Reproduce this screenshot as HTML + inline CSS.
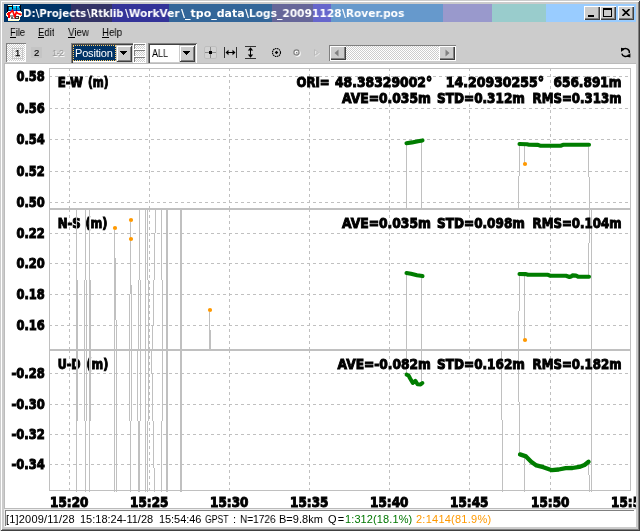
<!DOCTYPE html>
<html><head><meta charset="utf-8"><title>RTKPLOT</title>
<style>
html,body{margin:0;padding:0;}
body{width:640px;height:531px;overflow:hidden;background:#cccccc;font:11px 'Liberation Sans', sans-serif;}
#win{position:absolute;left:0;top:0;width:640px;height:531px;background:#cccccc;overflow:hidden;
 box-shadow:inset 1px 1px 0 #cccccc,inset -1px -1px 0 #404040,inset 2px 2px 0 #fff,inset -2px -2px 0 #808080;}
.abs,.t{position:absolute;}
.t{white-space:pre;display:block;will-change:transform;}
svg.plot{will-change:transform;}
#title{left:4px;top:4px;width:632px;height:18px;background:linear-gradient(90deg,#003366 0px,#003366 67px,#333366 67px,#333366 108px,#333399 108px,#333399 165px,#336699 165px,#336699 268px,#666699 268px,#666699 309px,#6666cc 309px,#6666cc 327px,#6699cc 327px,#6699cc 439.5px,#9999cc 439.5px,#9999cc 488.5px,#99cccc 488.5px,#99cccc 542.5px,#99ccff 542.5px,#99ccff 632px);}
.cbtn{position:absolute;top:6px;width:16px;height:14px;background:#cccccc;box-sizing:border-box;
 box-shadow:inset 1px 1px 0 #fff,inset -1px -1px 0 #404040,inset -2px -2px 0 #808080;}
.sunk{box-shadow:inset 1px 1px 0 #808080,inset -1px -1px 0 #fff,inset 2px 2px 0 #404040,inset -2px -2px 0 #cccccc;}
.raise{box-shadow:inset 1px 1px 0 #cccccc,inset -1px -1px 0 #404040,inset 2px 2px 0 #fff,inset -2px -2px 0 #808080;}
.dith{background-image:conic-gradient(#fff 25%,#cccccc 0 50%,#fff 0 75%,#cccccc 0);background-size:2px 2px;}
svg.plot{position:absolute;left:0;top:0;}
u{text-decoration:none;}
</style></head>
<body>
<div id="win">
<div id="title" class="abs"></div>
<svg class="abs" style="left:6px;top:5px" width="16" height="16" viewBox="0 0 16 16" shape-rendering="crispEdges">
<rect x="2" y="1" width="12" height="14" fill="#fff"/><rect x="1" y="6" width="14" height="6" fill="#fff"/><rect x="14" y="7" width="2" height="4" fill="#fff"/>
<rect x="2" y="0" width="4" height="1" fill="#ffffcc"/><rect x="7" y="0" width="4" height="1" fill="#fff"/><rect x="0" y="8" width="1" height="3" fill="#ffffcc"/>
<rect x="2" y="15" width="11" height="1" fill="#ffffcc"/><rect x="14" y="4" width="1" height="3" fill="#ffffcc"/><rect x="15" y="8" width="1" height="3" fill="#ffffcc"/><rect x="13" y="12" width="1" height="3" fill="#ffffcc"/>
<rect x="2" y="1" width="12" height="5" fill="#003366"/>
<rect x="2" y="1" width="4" height="1" fill="#000"/><rect x="1" y="1" width="1" height="6" fill="#000"/><rect x="14" y="0" width="1" height="6" fill="#000"/>
<rect x="3" y="2" width="3" height="3" fill="#00ccff"/><rect x="3" y="4" width="3" height="1" fill="#0099cc"/><rect x="4" y="5" width="2" height="1" fill="#0033cc"/>
<rect x="7" y="1" width="3" height="4" fill="#00ccff"/><rect x="7" y="3" width="3" height="2" fill="#0099cc"/><rect x="7" y="5" width="3" height="1" fill="#0033cc"/>
<rect x="11" y="1" width="2" height="4" fill="#00ccff"/><rect x="11" y="3" width="3" height="2" fill="#0099cc"/><rect x="11" y="5" width="3" height="1" fill="#0033cc"/>
<rect x="10" y="0" width="4" height="1" fill="#fff"/><rect x="6" y="1" width="1" height="3" fill="#000"/><rect x="10" y="1" width="1" height="4" fill="#003366"/>
<rect x="4" y="10" width="4" height="2" fill="#999"/><rect x="5" y="12" width="2" height="2" fill="#666"/><rect x="9" y="11" width="4" height="3" fill="#333"/><rect x="10" y="12" width="2" height="1" fill="#ccc"/><rect x="7" y="13" width="2" height="1" fill="#999"/>
<polyline points="1.5,9 3.5,8.5 6.5,5.5 8.8,11.5 10.4,7.2 12,8.6 15.5,9.6" fill="none" stroke="#ff0000" stroke-width="1.7" shape-rendering="auto"/>
<rect x="2" y="7" width="2" height="6" fill="#ff0000"/><rect x="1" y="8" width="1" height="2" fill="#ff0000"/>
</svg>
<span class="t" style="left:22.67px;top:6px;line-height:15px;font:bold 11px 'DejaVu Sans', 'Liberation Sans', sans-serif;line-height:15px;letter-spacing:0px;color:#fff;transform:scaleX(0.929);transform-origin:0 0;">D:\Projects</span>
<span class="t" style="left:87.4px;top:6px;line-height:15px;font:bold 11px 'DejaVu Sans', 'Liberation Sans', sans-serif;line-height:15px;letter-spacing:0px;color:#fff;transform:scaleX(0.9014);transform-origin:0 0;">\Rtklib</span>
<span class="t" style="left:125.0px;top:6px;line-height:15px;font:bold 11px 'DejaVu Sans', 'Liberation Sans', sans-serif;line-height:15px;letter-spacing:0px;color:#fff;transform:scaleX(0.9577);transform-origin:0 0;">\WorkVer</span>
<span class="t" style="left:181.0px;top:6px;line-height:15px;font:bold 11px 'DejaVu Sans', 'Liberation Sans', sans-serif;line-height:15px;letter-spacing:0px;color:#fff;transform:scaleX(0.9959);transform-origin:0 0;">\_tpo_data</span>
<span class="t" style="left:245.0px;top:6px;line-height:15px;font:bold 11px 'DejaVu Sans', 'Liberation Sans', sans-serif;line-height:15px;letter-spacing:0px;color:#fff;transform:scaleX(0.9689);transform-origin:0 0;">\Logs_20091128</span>
<span class="t" style="left:342.0px;top:6px;line-height:15px;font:bold 11px 'DejaVu Sans', 'Liberation Sans', sans-serif;line-height:15px;letter-spacing:0px;color:#fff;transform:scaleX(0.9625);transform-origin:0 0;">\Rover.pos</span>
<div class="cbtn" style="left:584px"><div class="abs" style="left:4px;top:9px;width:6px;height:2px;background:#000"></div></div>
<div class="cbtn" style="left:600px"><div class="abs" style="left:3px;top:2px;width:9px;height:9px;box-sizing:border-box;border:1px solid #000;border-top-width:2px"></div></div>
<div class="cbtn" style="left:618px"><svg class="abs" style="left:4px;top:3px" width="8" height="7" viewBox="0 0 8 7"><path d="M0.5 0L7.5 7M7.5 0L0.5 7" stroke="#000" stroke-width="1.6" fill="none"/></svg></div>
<span class="t" style="left:10.0px;top:25px;line-height:14px;font:11px 'Liberation Sans', sans-serif;line-height:14px;letter-spacing:0px;color:#000;transform:scaleX(0.8519);transform-origin:0 0;">File</span>
<span class="t" style="left:38.0px;top:25px;line-height:14px;font:11px 'Liberation Sans', sans-serif;line-height:14px;letter-spacing:0px;color:#000;transform:scaleX(0.8678);transform-origin:0 0;">Edit</span>
<span class="t" style="left:68.0px;top:25px;line-height:14px;font:11px 'Liberation Sans', sans-serif;line-height:14px;letter-spacing:0px;color:#000;transform:scaleX(0.8861);transform-origin:0 0;">View</span>
<span class="t" style="left:102.0px;top:25px;line-height:14px;font:11px 'Liberation Sans', sans-serif;line-height:14px;letter-spacing:0px;color:#000;transform:scaleX(0.8887);transform-origin:0 0;">Help</span>
<div class="abs" style="left:10px;top:37px;width:6px;height:1px;background:#000"></div>
<div class="abs" style="left:38px;top:37px;width:6px;height:1px;background:#000"></div>
<div class="abs" style="left:68px;top:37px;width:7px;height:1px;background:#000"></div>
<div class="abs" style="left:102px;top:37px;width:7px;height:1px;background:#000"></div>
<div class="abs dith" style="left:6px;top:43px;width:20px;height:19px;box-shadow:inset 1px 1px 0 #808080,inset -1px -1px 0 #fff;"></div>
<div class="abs" style="left:12px;top:48px;width:11px;height:11px;box-sizing:border-box;border:1px solid #c6c6c6;"></div>
<span class="t" style="left:15px;top:48px;font:9.5px 'Liberation Sans', sans-serif;line-height:10px;color:#000;-webkit-text-stroke:0.25px #000">1</span>
<div class="abs" style="left:31px;top:47px;width:11px;height:11px;background:#c4c4c4"></div>
<span class="t" style="left:33.8px;top:47.5px;font:9.5px 'Liberation Sans', sans-serif;line-height:10px;color:#000;-webkit-text-stroke:0.15px #000">2</span>
<span class="t" style="left:52px;top:47.5px;font:9.5px 'Liberation Sans', sans-serif;line-height:10px;letter-spacing:-0.9px;color:#999;text-shadow:1px 1px 0 #fff">1-2</span>
<div class="abs sunk" style="left:71px;top:43px;width:63px;height:21px;background:#fff"></div><div class="abs" style="left:73px;top:45px;width:43px;height:16px;background:#003366;box-sizing:border-box;border:1px dotted #ffcc66"></div><span class="t" style="left:74.6px;top:46px;line-height:14px;font:11px 'Liberation Sans', sans-serif;line-height:14px;letter-spacing:-0.174px;color:#fff;">Position</span><div class="abs raise" style="left:116px;top:45px;width:16px;height:17px;background:#cccccc"></div><svg class="abs" style="left:120px;top:51px" width="7" height="4" viewBox="0 0 7 4" shape-rendering="crispEdges"><path d="M0 0H7V1H0ZM1 1H6V2H1ZM2 2H5V3H2ZM3 3H4V4H3Z" fill="#000"/></svg>
<div class="abs" style="left:133px;top:43px;width:13px;height:20px;background:#fff"></div>
<div class="abs dith" style="left:134px;top:44px;width:11px;height:5px;box-shadow:inset 1px 1px 0 #808080"></div>
<div class="abs dith" style="left:134px;top:50px;width:11px;height:6px;box-shadow:inset 1px 1px 0 #808080"></div>
<div class="abs dith" style="left:134px;top:57px;width:11px;height:5px;box-shadow:inset 1px 1px 0 #808080"></div>
<div class="abs sunk" style="left:148px;top:43px;width:49px;height:21px;background:#fff"></div><span class="t" style="left:152.0px;top:46px;line-height:14px;font:11px 'Liberation Sans', sans-serif;line-height:14px;letter-spacing:0px;color:#000;transform:scaleX(0.8224);transform-origin:0 0;">ALL</span><div class="abs raise" style="left:179px;top:45px;width:16px;height:17px;background:#cccccc"></div><svg class="abs" style="left:183px;top:51px" width="7" height="4" viewBox="0 0 7 4" shape-rendering="crispEdges"><path d="M0 0H7V1H0ZM1 1H6V2H1ZM2 2H5V3H2ZM3 3H4V4H3Z" fill="#000"/></svg>
<svg class="abs" style="left:200px;top:43px" width="125" height="20" viewBox="200 43 125 20" shape-rendering="crispEdges">
<rect x="204.5" y="46.5" width="12" height="12" rx="1.5" fill="#d2d2d2" stroke="#bdbdbd" stroke-width="1" shape-rendering="auto"/>
<rect x="205" y="52" width="11" height="1" fill="#8a8a8a"/><rect x="210" y="47" width="1" height="11" fill="#8a8a8a"/><rect x="209" y="51" width="3" height="3" fill="#000"/>
<rect x="224" y="47" width="1" height="11" fill="#333"/><rect x="236" y="47" width="1" height="11" fill="#333"/>
<rect x="226" y="52" width="9" height="1" fill="#000"/><path d="M225.5 52.5L228.5 49.8V55.2ZM235.5 52.5L232.5 49.8V55.2Z" fill="#000" shape-rendering="auto"/>
<rect x="245" y="46" width="11" height="1" fill="#333"/><rect x="245" y="58" width="11" height="1" fill="#333"/>
<rect x="250" y="48" width="1" height="9" fill="#000"/><path d="M250.5 47.2L247.8 50.4H253.2ZM250.5 57.8L247.8 54.6H253.2Z" fill="#000" shape-rendering="auto"/>
<circle cx="276.5" cy="52.5" r="4" fill="none" stroke="#000" stroke-width="1.15" stroke-dasharray="1.5 0.6" shape-rendering="auto"/><path d="M276.5 50.7L278.3 52.5L276.5 54.3L274.7 52.5Z" fill="#000" shape-rendering="auto"/>
<circle cx="297.5" cy="53.5" r="2.6" fill="none" stroke="#fff" stroke-width="1.2" shape-rendering="auto"/>
<circle cx="296.5" cy="52.5" r="2.6" fill="none" stroke="#808080" stroke-width="1.1" shape-rendering="auto"/><rect x="296" y="52" width="1" height="1" fill="#808080"/>
<path d="M315.5 50.5V56.5L319.5 53.5Z" fill="none" stroke="#e6e6e6" stroke-width="1" shape-rendering="auto"/>
<path d="M314.5 49.5V55.5L318.5 52.5Z" fill="none" stroke="#bbb" stroke-width="1" shape-rendering="auto"/>
</svg>
<div class="abs dith" style="left:329px;top:45px;width:127px;height:16px;box-shadow:inset 1px 1px 0 #808080,inset -1px -1px 0 #fff"></div>
<div class="abs" style="left:330px;top:46px;width:16px;height:14px;background:#cccccc;box-shadow:inset 1px 1px 0 #fff,inset -1px -1px 0 #404040,inset -2px -2px 0 #808080"><svg width="16" height="14" viewBox="0 0 16 14"><path d="M8.5 3.5V10.5L4.5 7Z" fill="#808080"/></svg></div>
<div class="abs" style="left:439px;top:46px;width:16px;height:14px;background:#cccccc;box-shadow:inset 1px 1px 0 #fff,inset -1px -1px 0 #404040,inset -2px -2px 0 #808080"><svg width="16" height="14" viewBox="0 0 16 14"><path d="M6.5 3.5V10.5L10.5 7Z" fill="#808080"/></svg></div>
<svg class="abs" style="left:619px;top:46px" width="14" height="14" viewBox="619 46 14 14">
<path d="M622.4 50.3A3.8 3.8 0 0 1 629.3 53.2" fill="none" stroke="#000" stroke-width="1.4"/>
<path d="M628.8 54.6A3.8 3.8 0 0 1 621.8 53.6" fill="none" stroke="#000" stroke-width="1.4"/>
<path d="M621 47.8L624.8 48.4L621 52Z" fill="#000"/><path d="M630.4 57.4L626.8 56.8L630.4 53.2Z" fill="#000"/>
</svg>
<div class="abs" style="left:4px;top:63px;width:632px;height:446px;background:#fff;box-sizing:border-box;border:1px solid #bbb;border-right:none;overflow:hidden">
<div class="abs" style="left:-1px;top:-1px;width:632px;height:445px"><svg class="plot" width="632" height="445" viewBox="4 63 632 445" shape-rendering="crispEdges"><rect x="49" y="68" width="582" height="1" fill="#c0c0c0"/><rect x="49" y="208" width="582" height="1" fill="#c0c0c0"/><rect x="49" y="68" width="1" height="141" fill="#c0c0c0"/><rect x="630" y="68" width="1" height="141" fill="#c0c0c0"/><rect x="49" y="209" width="582" height="1" fill="#c0c0c0"/><rect x="49" y="349" width="582" height="1" fill="#c0c0c0"/><rect x="49" y="209" width="1" height="141" fill="#c0c0c0"/><rect x="630" y="209" width="1" height="141" fill="#c0c0c0"/><rect x="49" y="350" width="582" height="1" fill="#c0c0c0"/><rect x="49" y="490" width="582" height="1" fill="#c0c0c0"/><rect x="49" y="350" width="1" height="141" fill="#c0c0c0"/><rect x="630" y="350" width="1" height="141" fill="#c0c0c0"/><path d="M49 76.5H630M49 108.5H630M49 139.5H630M49 171.5H630M49 202.5H630M69.5 68V209M149.5 68V209M229.5 68V209M309.5 68V209M389.5 68V209M469.5 68V209M550.5 68V209M49 233.5H630M49 263.5H630M49 294.5H630M49 325.5H630M69.5 209V350M149.5 209V350M229.5 209V350M309.5 209V350M389.5 209V350M469.5 209V350M550.5 209V350M49 373.5H630M49 404.5H630M49 434.5H630M49 464.5H630M69.5 350V491M149.5 350V491M229.5 350V491M309.5 350V491M389.5 350V491M469.5 350V491M550.5 350V491" stroke="#c0c0c0" stroke-width="1" stroke-dasharray="3 3" fill="none"/><g font-family="'DejaVu Sans', 'Liberation Sans', sans-serif" font-weight="bold" font-size="13.5" fill="#000" stroke="#000" stroke-width="1.0" shape-rendering="auto"><text x="57.64" y="87" textLength="25.36" lengthAdjust="spacingAndGlyphs">E-W</text><text x="88.01" y="87" textLength="20.62" lengthAdjust="spacingAndGlyphs">(m)</text><text x="57.64" y="228" textLength="23.0" lengthAdjust="spacingAndGlyphs">N-S</text><text x="85.48" y="228" textLength="22.07" lengthAdjust="spacingAndGlyphs">(m)</text><text x="57.66" y="369" textLength="22.92" lengthAdjust="spacingAndGlyphs">U-D</text><text x="86.4" y="369" textLength="21.85" lengthAdjust="spacingAndGlyphs">(m)</text></g><rect x="406" y="144" width="1" height="65" fill="#c0c0c0"/><rect x="421" y="141" width="1" height="68" fill="#c0c0c0"/><rect x="519" y="146" width="1" height="30" fill="#c0c0c0"/><rect x="518" y="176" width="1" height="33" fill="#c0c0c0"/><rect x="524" y="146" width="1" height="17" fill="#c0c0c0"/><rect x="588" y="147" width="1" height="30" fill="#c0c0c0"/><rect x="589" y="177" width="1" height="32" fill="#c0c0c0"/><rect x="406" y="275" width="1" height="75" fill="#c0c0c0"/><rect x="421" y="277" width="1" height="73" fill="#c0c0c0"/><rect x="406" y="350" width="1" height="24" fill="#c0c0c0"/><rect x="421" y="350" width="1" height="32" fill="#c0c0c0"/><rect x="519" y="276" width="1" height="35" fill="#c0c0c0"/><rect x="518" y="311" width="1" height="91" fill="#c0c0c0"/><rect x="519" y="402" width="1" height="53" fill="#c0c0c0"/><rect x="524" y="276" width="1" height="63" fill="#c0c0c0"/><rect x="589" y="209" width="1" height="34" fill="#c0c0c0"/><rect x="588" y="243" width="1" height="32" fill="#c0c0c0"/><rect x="591" y="209" width="1" height="283" fill="#c0c0c0"/><rect x="76" y="209" width="1" height="71" fill="#c0c0c0"/><rect x="76" y="280" width="2" height="141" fill="#c0c0c0"/><rect x="76" y="421" width="1" height="71" fill="#c0c0c0"/><rect x="85" y="209" width="1" height="71" fill="#c0c0c0"/><rect x="84" y="280" width="1" height="141" fill="#c0c0c0"/><rect x="86" y="280" width="1" height="141" fill="#c0c0c0"/><rect x="85" y="421" width="1" height="71" fill="#c0c0c0"/><rect x="89" y="209" width="1" height="71" fill="#c0c0c0"/><rect x="89" y="280" width="2" height="141" fill="#c0c0c0"/><rect x="89" y="421" width="1" height="71" fill="#c0c0c0"/><rect x="114" y="230" width="1" height="28" fill="#c0c0c0"/><rect x="114" y="258" width="2" height="62" fill="#c0c0c0"/><rect x="114" y="320" width="1" height="172" fill="#c0c0c0"/><rect x="116" y="320" width="1" height="172" fill="#c0c0c0"/><rect x="129" y="294" width="1" height="127" fill="#c0c0c0"/><rect x="130" y="222" width="1" height="63" fill="#c0c0c0"/><rect x="130" y="285" width="2" height="9" fill="#c0c0c0"/><rect x="131" y="294" width="1" height="127" fill="#c0c0c0"/><rect x="130" y="421" width="1" height="71" fill="#c0c0c0"/><rect x="139" y="209" width="1" height="71" fill="#c0c0c0"/><rect x="138" y="280" width="1" height="70" fill="#c0c0c0"/><rect x="140" y="280" width="1" height="141" fill="#c0c0c0"/><rect x="137" y="350" width="1" height="71" fill="#c0c0c0"/><rect x="138" y="421" width="2" height="71" fill="#c0c0c0"/><rect x="145" y="209" width="1" height="283" fill="#c0c0c0"/><rect x="147" y="209" width="1" height="71" fill="#c0c0c0"/><rect x="148" y="280" width="1" height="141" fill="#c0c0c0"/><rect x="147" y="421" width="1" height="71" fill="#c0c0c0"/><rect x="155" y="209" width="1" height="24" fill="#c0c0c0"/><rect x="154" y="233" width="1" height="47" fill="#c0c0c0"/><rect x="153" y="280" width="1" height="46" fill="#c0c0c0"/><rect x="152" y="326" width="1" height="24" fill="#c0c0c0"/><rect x="151" y="350" width="1" height="23" fill="#c0c0c0"/><rect x="152" y="373" width="1" height="48" fill="#c0c0c0"/><rect x="153" y="421" width="1" height="47" fill="#c0c0c0"/><rect x="154" y="468" width="1" height="24" fill="#c0c0c0"/><rect x="161" y="209" width="1" height="71" fill="#c0c0c0"/><rect x="162" y="280" width="1" height="141" fill="#c0c0c0"/><rect x="161" y="421" width="1" height="71" fill="#c0c0c0"/><rect x="166" y="209" width="2" height="283" fill="#c0c0c0"/><rect x="180" y="209" width="2" height="283" fill="#c0c0c0"/><rect x="209" y="312" width="1" height="18" fill="#c0c0c0"/><rect x="209" y="330" width="2" height="20" fill="#c0c0c0"/><rect x="501" y="351" width="1" height="69" fill="#c0c0c0"/><rect x="502" y="420" width="1" height="72" fill="#c0c0c0"/><rect x="524" y="458" width="1" height="34" fill="#c0c0c0"/><rect x="588" y="463" width="1" height="12" fill="#c0c0c0"/><rect x="589" y="475" width="1" height="17" fill="#c0c0c0"/><polyline points="406.5,143.2 412,142.4 418,141.2 422.5,140.4" fill="none" stroke="#007d00" stroke-width="4.1" stroke-linecap="round" stroke-linejoin="round" shape-rendering="auto"/><polyline points="519.5,144 527,144.2 529,144.7 538,144.9 540,145.7 561,145.7 563,144.8 589,144.7" fill="none" stroke="#007d00" stroke-width="4.1" stroke-linecap="round" stroke-linejoin="round" shape-rendering="auto"/><polyline points="406.5,273 411,273.8 417,275.2 422.5,276.1" fill="none" stroke="#007d00" stroke-width="4.1" stroke-linecap="round" stroke-linejoin="round" shape-rendering="auto"/><polyline points="519.5,274 526,274.1 528,274.8 548,274.8 550,275.7 566,275.8 569.5,277 571,276.6 572.5,275.4 576,275.6 578,276.6 589,276.8" fill="none" stroke="#007d00" stroke-width="4.1" stroke-linecap="round" stroke-linejoin="round" shape-rendering="auto"/><polyline points="406.6,374.6 408.5,375.5 410.3,378.8 412.8,383.0 415.4,380.9 417.5,384.2 420.6,384.4 422.4,383.0" fill="none" stroke="#007d00" stroke-width="4.0" stroke-linecap="round" stroke-linejoin="round" shape-rendering="auto"/><polyline points="520.0,454.4 526,456.4 531.2,461.7 536.4,465.4 543.3,467.2 551.9,470.2 558.7,469.5 565.6,468.1 572.5,468.0 579.3,466.9 584.5,465 588.6,461.8" fill="none" stroke="#007d00" stroke-width="4.3" stroke-linecap="round" stroke-linejoin="round" shape-rendering="auto"/><circle cx="525" cy="164" r="2.1" fill="#ff9900" shape-rendering="auto"/><circle cx="115" cy="228" r="2.1" fill="#ff9900" shape-rendering="auto"/><circle cx="131" cy="220" r="2.1" fill="#ff9900" shape-rendering="auto"/><circle cx="131" cy="239" r="2.1" fill="#ff9900" shape-rendering="auto"/><circle cx="210" cy="310" r="2.1" fill="#ff9900" shape-rendering="auto"/><circle cx="525" cy="340" r="2.1" fill="#ff9900" shape-rendering="auto"/><g font-family="'DejaVu Sans', 'Liberation Sans', sans-serif" font-weight="bold" font-size="13.5" fill="#000" stroke="#000" stroke-width="1.0" shape-rendering="auto"><text x="16.5" y="81" textLength="28.33" lengthAdjust="spacingAndGlyphs">0.58</text><text x="16.5" y="113" textLength="28.33" lengthAdjust="spacingAndGlyphs">0.56</text><text x="16.5" y="144" textLength="28.33" lengthAdjust="spacingAndGlyphs">0.54</text><text x="16.5" y="176" textLength="28.33" lengthAdjust="spacingAndGlyphs">0.52</text><text x="16.5" y="207" textLength="28.33" lengthAdjust="spacingAndGlyphs">0.50</text><text x="16.5" y="238" textLength="28.33" lengthAdjust="spacingAndGlyphs">0.22</text><text x="16.5" y="268" textLength="28.33" lengthAdjust="spacingAndGlyphs">0.20</text><text x="16.5" y="299" textLength="28.33" lengthAdjust="spacingAndGlyphs">0.18</text><text x="16.5" y="330" textLength="28.33" lengthAdjust="spacingAndGlyphs">0.16</text><text x="11.5" y="378" textLength="33.34" lengthAdjust="spacingAndGlyphs">-0.28</text><text x="11.5" y="409" textLength="33.34" lengthAdjust="spacingAndGlyphs">-0.30</text><text x="11.5" y="439" textLength="33.34" lengthAdjust="spacingAndGlyphs">-0.32</text><text x="11.5" y="469" textLength="33.34" lengthAdjust="spacingAndGlyphs">-0.34</text><text x="50.11" y="507" textLength="38.27" lengthAdjust="spacingAndGlyphs">15:20</text><text x="130.11" y="507" textLength="38.24" lengthAdjust="spacingAndGlyphs">15:25</text><text x="210.11" y="507" textLength="38.27" lengthAdjust="spacingAndGlyphs">15:30</text><text x="290.11" y="507" textLength="38.24" lengthAdjust="spacingAndGlyphs">15:35</text><text x="370.11" y="507" textLength="38.27" lengthAdjust="spacingAndGlyphs">15:40</text><text x="450.11" y="507" textLength="38.24" lengthAdjust="spacingAndGlyphs">15:45</text><text x="531.11" y="507" textLength="38.27" lengthAdjust="spacingAndGlyphs">15:50</text><text x="611.11" y="507" textLength="38.24" lengthAdjust="spacingAndGlyphs">15:55</text><text x="296.5" y="87" textLength="33.14" lengthAdjust="spacingAndGlyphs">ORI=</text><text x="335.0" y="87" textLength="97.1" lengthAdjust="spacingAndGlyphs">48.38329002°</text><text x="445.78" y="87" textLength="98.23" lengthAdjust="spacingAndGlyphs">14.20930255°</text><text x="553.5" y="87" textLength="67.98" lengthAdjust="spacingAndGlyphs">656.891m</text><text x="342.0" y="103" textLength="88.89" lengthAdjust="spacingAndGlyphs">AVE=0.035m</text><text x="437.1" y="103" textLength="87.75" lengthAdjust="spacingAndGlyphs">STD=0.312m</text><text x="532.61" y="103" textLength="88.88" lengthAdjust="spacingAndGlyphs">RMS=0.313m</text><text x="342.0" y="228" textLength="88.89" lengthAdjust="spacingAndGlyphs">AVE=0.035m</text><text x="437.1" y="228" textLength="87.75" lengthAdjust="spacingAndGlyphs">STD=0.098m</text><text x="532.61" y="228" textLength="88.88" lengthAdjust="spacingAndGlyphs">RMS=0.104m</text><text x="337.5" y="369" textLength="93.37" lengthAdjust="spacingAndGlyphs">AVE=-0.082m</text><text x="437.1" y="369" textLength="87.75" lengthAdjust="spacingAndGlyphs">STD=0.162m</text><text x="532.61" y="369" textLength="88.88" lengthAdjust="spacingAndGlyphs">RMS=0.182m</text></g></svg></div>
</div>
<div class="abs" style="left:4px;top:509px;width:632px;height:18px;background:#fff;box-shadow:inset 1px 1px 0 #eeeeee"></div>
<div class="abs" style="left:5px;top:510px;width:629px;height:16px;box-sizing:border-box;border-top:1px solid #808080;border-left:1px solid #808080"></div>
<span class="t" style="left:6.4px;top:512px;line-height:14px;font:11px 'Liberation Sans', sans-serif;line-height:14px;letter-spacing:0.188px;color:#000;">[1]2009/11/28</span>
<span class="t" style="left:80.0px;top:512px;line-height:14px;font:11px 'Liberation Sans', sans-serif;line-height:14px;letter-spacing:-0.006px;color:#000;">15:18:24-11/28</span>
<span class="t" style="left:158.75px;top:512px;line-height:14px;font:11px 'Liberation Sans', sans-serif;line-height:14px;letter-spacing:-0.064px;color:#000;">15:54:46</span>
<span class="t" style="left:205.0px;top:512px;line-height:14px;font:11px 'Liberation Sans', sans-serif;line-height:14px;letter-spacing:0px;color:#000;transform:scaleX(0.7856);transform-origin:0 0;">GPST</span>
<span class="t" style="left:232.6px;top:512px;line-height:14px;font:11px 'Liberation Sans', sans-serif;line-height:14px;letter-spacing:0px;color:#000;">:</span>
<span class="t" style="left:239.5px;top:512px;line-height:14px;font:11px 'Liberation Sans', sans-serif;line-height:14px;letter-spacing:0px;color:#000;transform:scaleX(0.9168);transform-origin:0 0;">N=1726</span>
<span class="t" style="left:278.75px;top:512px;line-height:14px;font:11px 'Liberation Sans', sans-serif;line-height:14px;letter-spacing:0.033px;color:#000;">B=9.8km</span>
<span class="t" style="left:328.0px;top:512px;line-height:14px;font:11px 'Liberation Sans', sans-serif;line-height:14px;letter-spacing:1.194px;color:#000;">Q=</span>
<span class="t" style="left:345.0px;top:512px;line-height:14px;font:11px 'Liberation Sans', sans-serif;line-height:14px;letter-spacing:0.111px;color:#007700;">1:312(18.1%)</span>
<span class="t" style="left:416.0px;top:512px;line-height:14px;font:11px 'Liberation Sans', sans-serif;line-height:14px;letter-spacing:0.242px;color:#ff9900;">2:1414(81.9%)</span>
</div>
</body></html>
